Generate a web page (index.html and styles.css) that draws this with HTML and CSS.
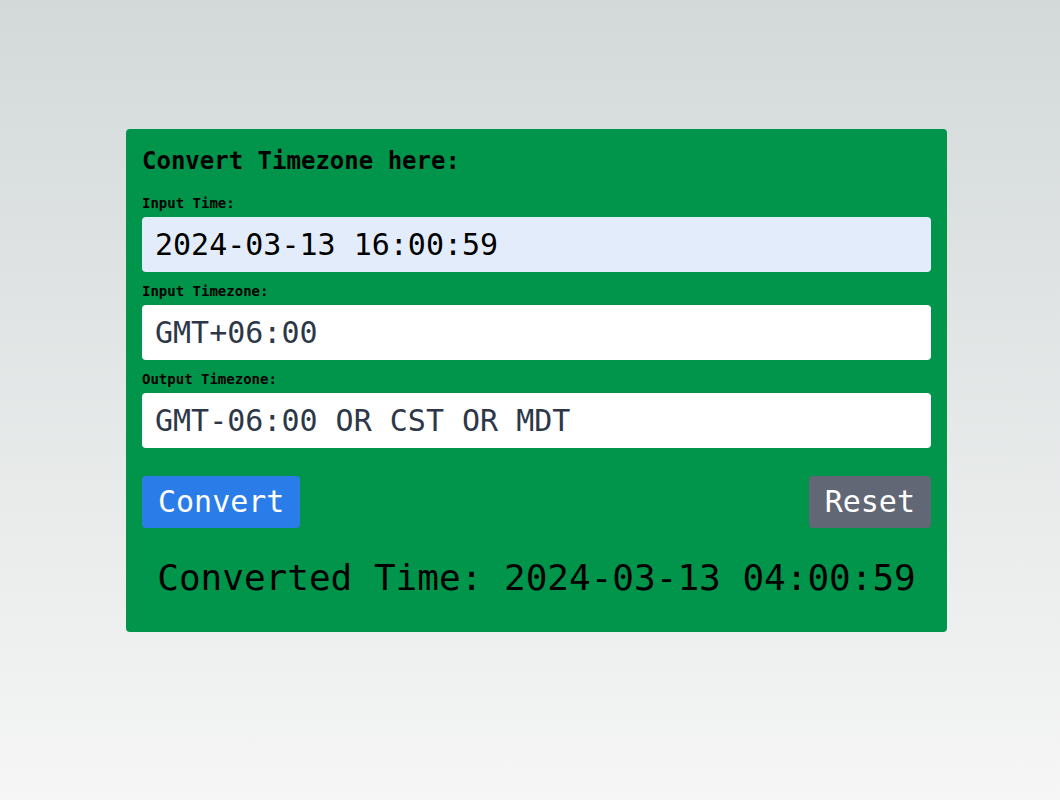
FILE: index.html
```html
<!DOCTYPE html>
<html lang="en">
<head>
<meta charset="utf-8">
<title>Convert Timezone</title>
<link rel="stylesheet" href="styles.css">
</head>
<body>
<div class="page">
  <div class="card">
    <h1 class="title">Convert Timezone here:</h1>
    <div class="field">
      <label class="label">Input Time:</label>
      <div class="input input-filled">2024-03-13 16:00:59</div>
    </div>
    <div class="field">
      <label class="label">Input Timezone:</label>
      <div class="input">GMT+06:00</div>
    </div>
    <div class="field">
      <label class="label">Output Timezone:</label>
      <div class="input">GMT-06:00 OR CST OR MDT</div>
    </div>
    <div class="actions">
      <button class="btn btn-primary">Convert</button>
      <button class="btn btn-secondary">Reset</button>
    </div>
    <p class="result">Converted Time: 2024-03-13 04:00:59</p>
  </div>
</div>
</body>
</html>
```
FILE: styles.css
```css
html, body {
  margin: 0;
  padding: 0;
}
body {
  min-height: 800px;
  background: linear-gradient(180deg, #d3d9d9 0%, #f5f6f5 100%);
  font-family: "DejaVu Sans Mono", monospace;
}
.page {
  padding: 129px 0 0 126px;
}
.card {
  width: 821px;
  box-sizing: border-box;
  background: #00954a;
  border-radius: 4px;
  padding: 16px 16px 16px;
}
.title {
  margin: 2px 0 17px;
  font-size: 24px;
  line-height: 1.2;
  font-weight: bold;
  color: #000;
}
.field {
  margin-bottom: 9px;
}
.field:last-of-type {
  margin-bottom: 0;
}
.label {
  display: block;
  font-size: 14px;
  line-height: 21px;
  font-weight: bold;
  color: #000;
  margin-bottom: 3px;
}
.input {
  box-sizing: border-box;
  height: 55px;
  padding: 0 13px;
  display: flex;
  align-items: center;
  background: #fff;
  border-radius: 4px;
  font-size: 30px;
  color: #2d3748;
}
.input-filled {
  background: #e3ecfb;
  color: #000;
}
.actions {
  display: flex;
  justify-content: space-between;
  margin-top: 28px;
}
.btn {
  font-family: "DejaVu Sans Mono", monospace;
  font-size: 30px;
  line-height: 36px;
  padding: 8px 16px;
  border: 0;
  border-radius: 4px;
  color: #fff;
}
.btn-primary {
  background: #2a7de9;
}
.btn-secondary {
  background: #616775;
}
.result {
  margin: 28px 0 17px;
  text-align: center;
  font-size: 36px;
  line-height: 1.2;
  color: #000;
}
```
